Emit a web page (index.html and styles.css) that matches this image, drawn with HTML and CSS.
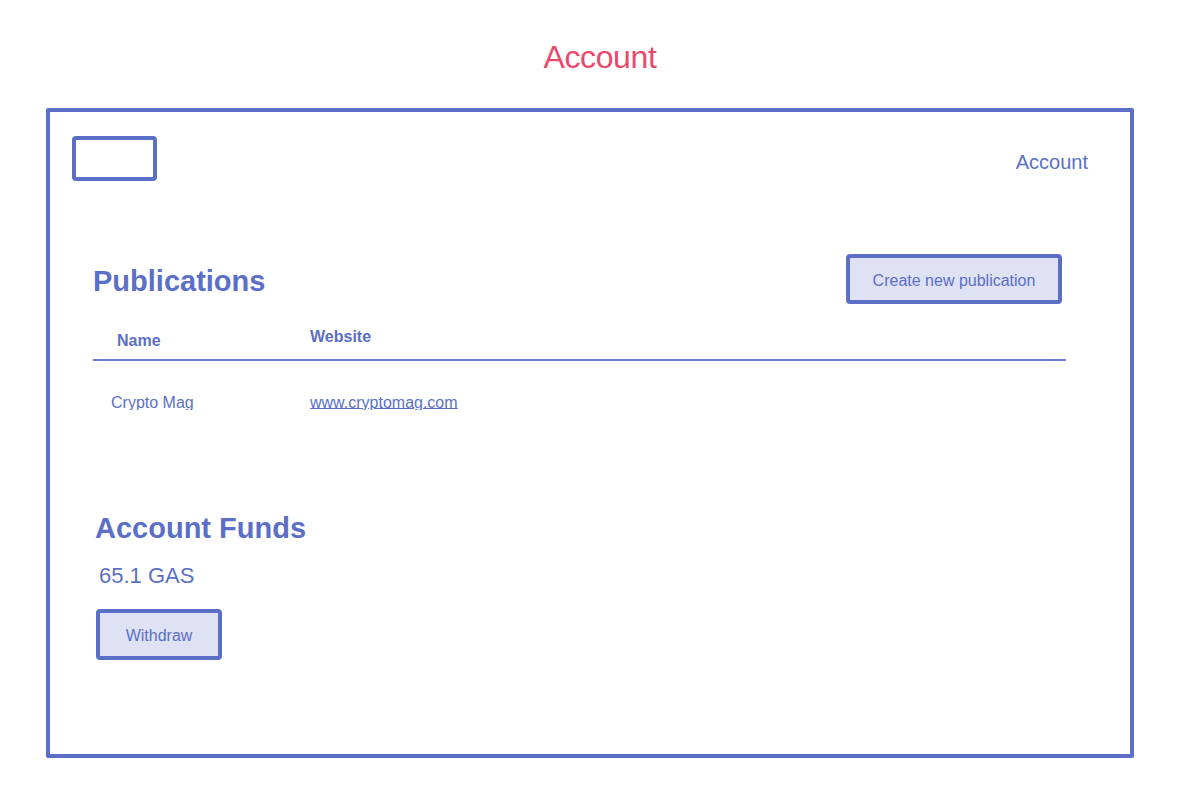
FILE: index.html
```html
<!DOCTYPE html>
<html lang="en">
<head>
<meta charset="utf-8">
<title>Account</title>
<link rel="stylesheet" href="styles.css">
</head>
<body>
  <h1 class="page-title">Account</h1>
  <div class="frame">
    <header class="topbar">
      <div class="logo"></div>
      <a class="nav-link" href="#">Account</a>
    </header>

    <section class="publications">
      <div class="section-head">
        <h2 class="section-title">Publications</h2>
        <button class="btn btn-create">Create new publication</button>
      </div>
      <div class="table">
        <div class="thead">
          <div class="th th-name">Name</div>
          <div class="th th-site">Website</div>
        </div>
        <div class="trow">
          <div class="td td-name">Crypto Mag</div>
          <div class="td td-site"><a href="#">www.cryptomag.com</a></div>
        </div>
      </div>
    </section>

    <section class="funds">
      <h2 class="section-title funds-title">Account Funds</h2>
      <div class="amount">65.1 GAS</div>
      <button class="btn btn-withdraw">Withdraw</button>
    </section>
  </div>
</body>
</html>
```

FILE: styles.css
```css
* { box-sizing: border-box; }

html, body {
  margin: 0;
  padding: 0;
  background: #ffffff;
}

body {
  font-family: "Liberation Sans", Arial, Helvetica, sans-serif;
  color: #5b6fc7;
  width: 1192px;
  height: 810px;
  overflow: hidden;
}

.page-title {
  margin: 0;
  padding: 37px 0 0 8px;
  font-size: 32px;
  line-height: 40px;
  font-weight: 400;
  text-align: center;
  color: #e94a6b;
  letter-spacing: -0.4px;
}

.frame {
  margin: 31px 0 0 46px;
  width: 1088px;
  height: 650px;
  border: 4px solid #5b6fc7;
  border-radius: 2px;
}

.topbar {
  display: flex;
  justify-content: space-between;
  align-items: flex-start;
  padding: 24px 42px 0 22px;
}

.logo {
  width: 85px;
  height: 45px;
  border: 4px solid #5b6fc7;
  border-radius: 4px;
}

.nav-link {
  margin-top: 14px;
  font-size: 20px;
  line-height: 24px;
  color: #5b6fc7;
  text-decoration: none;
}

.publications {
  padding: 0 64px 0 43px;
}

.section-head {
  display: flex;
  justify-content: space-between;
  align-items: flex-start;
  margin-top: 73px;
}

.section-title {
  margin: 10px 0 0 0;
  font-size: 29px;
  line-height: 34px;
  font-weight: 700;
  color: #5b6fc7;
}

.btn {
  display: flex;
  align-items: center;
  justify-content: center;
  padding: 0;
  background: #dfe1f4;
  border: 4px solid #5b6fc7;
  border-radius: 4px;
  color: #5b6fc7;
  font-family: "Liberation Sans", Arial, Helvetica, sans-serif;
  font-size: 16px;
  line-height: 20px;
  cursor: pointer;
}

.btn-create {
  width: 216px;
  height: 50px;
  margin-right: 4px;
  padding-top: 3px;
}

.thead,
.trow {
  display: grid;
  grid-template-columns: 217px 1fr;
  align-items: start;
}

.thead {
  margin-top: 23px;
  border-bottom: 2px solid #6a7ad0;
}

.th {
  font-size: 16px;
  line-height: 20px;
  font-weight: 700;
}

.th-name {
  padding: 4px 0 8px 24px;
}

.th-site {
  padding: 0;
}

.trow {
  margin-top: 33px;
}

.td {
  height: 16px;
  overflow: hidden;
  font-size: 16px;
  line-height: 18px;
}

.td-name {
  padding-left: 18px;
}

.td-site a {
  color: #5b6fc7;
  text-decoration: underline;
  text-underline-offset: 0px;
}

.funds {
  padding-left: 45px;
}

.funds-title {
  margin-top: 101px;
}

.amount {
  margin-top: 17px;
  padding-left: 4px;
  font-size: 22px;
  line-height: 28px;
}

.btn-withdraw {
  margin: 19px 0 0 1px;
  width: 126px;
  height: 51px;
  padding-top: 2px;
}
```
